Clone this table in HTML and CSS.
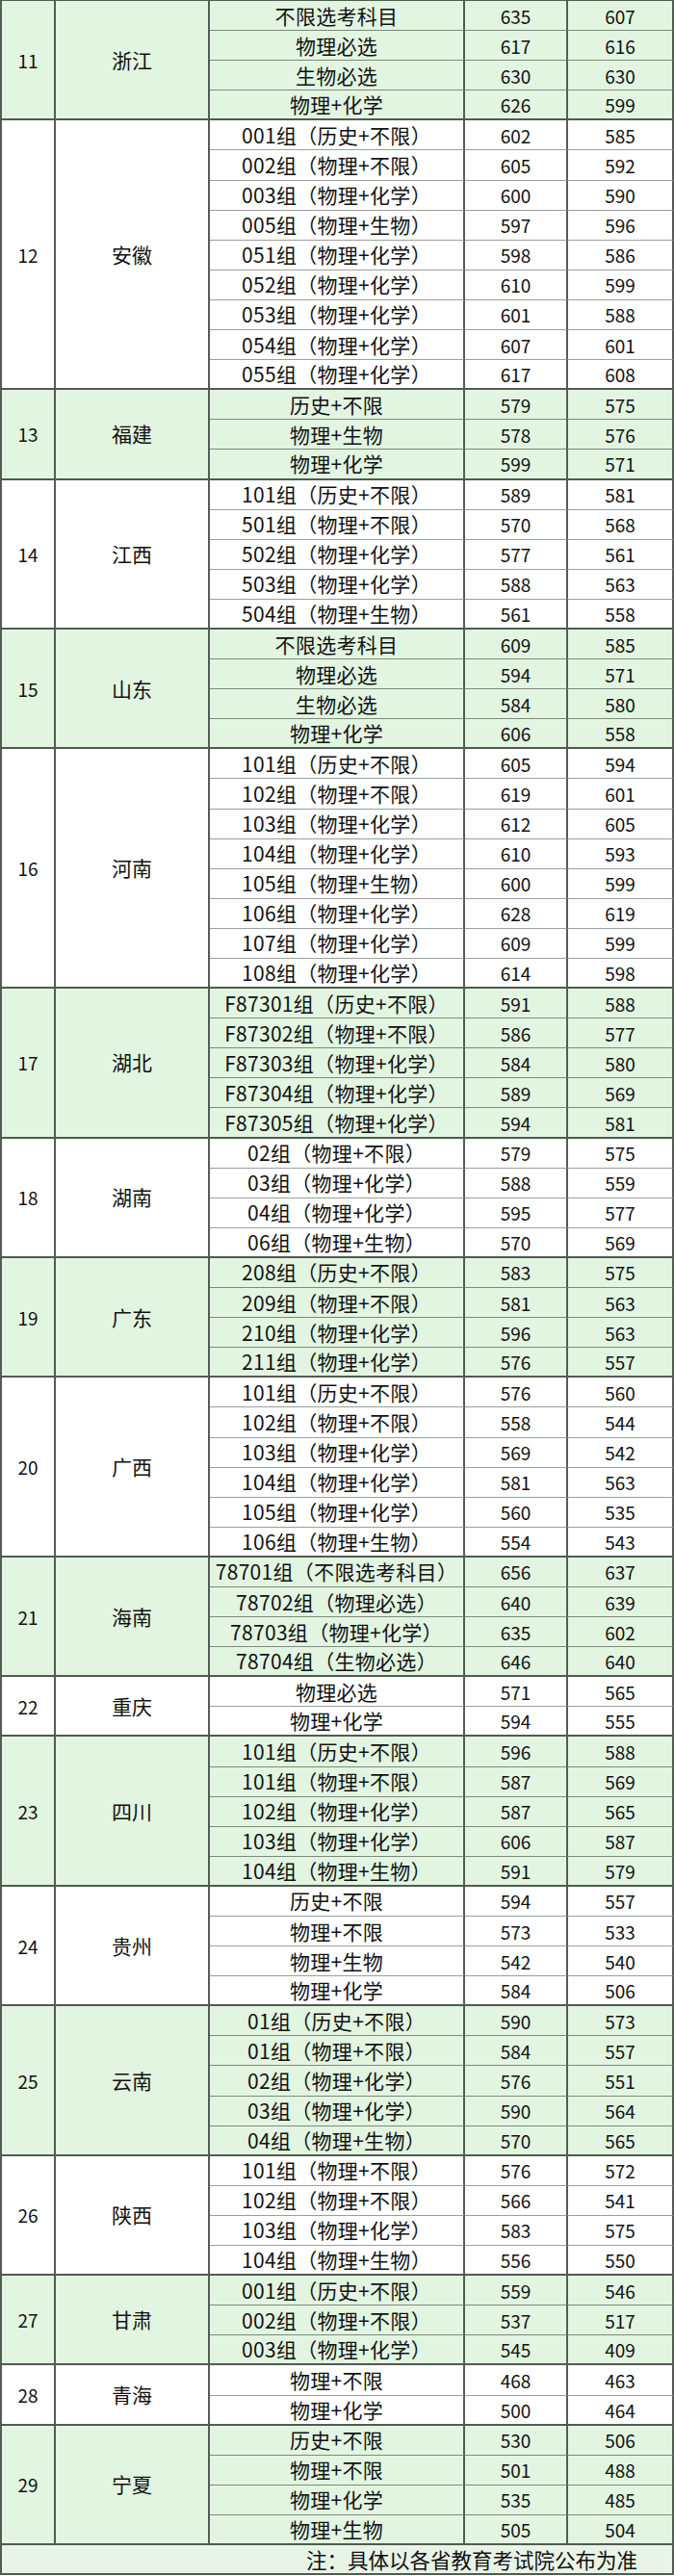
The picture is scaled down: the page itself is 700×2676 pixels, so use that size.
FILE: index.html
```html
<!DOCTYPE html>
<html lang="zh-CN">
<head>
<meta charset="utf-8">
<title>分数线</title>
<link rel="stylesheet" href="styles.css">
</head>
<body>
<div class="table">
  <div class="grp g">
    <div class="idx" style="grid-row: span 4">11</div><div class="prov" style="grid-row: span 4">浙江</div>
    <div class="row"><div class="c sub">不限选考科目</div><div class="c num">635</div><div class="c num">607</div></div>
    <div class="row"><div class="c sub">物理必选</div><div class="c num">617</div><div class="c num">616</div></div>
    <div class="row"><div class="c sub">生物必选</div><div class="c num">630</div><div class="c num">630</div></div>
    <div class="row"><div class="c sub">物理+化学</div><div class="c num">626</div><div class="c num">599</div></div>
  </div>
  <div class="grp">
    <div class="idx" style="grid-row: span 9">12</div><div class="prov" style="grid-row: span 9">安徽</div>
    <div class="row"><div class="c sub">001组（历史+不限）</div><div class="c num">602</div><div class="c num">585</div></div>
    <div class="row"><div class="c sub">002组（物理+不限）</div><div class="c num">605</div><div class="c num">592</div></div>
    <div class="row"><div class="c sub">003组（物理+化学）</div><div class="c num">600</div><div class="c num">590</div></div>
    <div class="row"><div class="c sub">005组（物理+生物）</div><div class="c num">597</div><div class="c num">596</div></div>
    <div class="row"><div class="c sub">051组（物理+化学）</div><div class="c num">598</div><div class="c num">586</div></div>
    <div class="row"><div class="c sub">052组（物理+化学）</div><div class="c num">610</div><div class="c num">599</div></div>
    <div class="row"><div class="c sub">053组（物理+化学）</div><div class="c num">601</div><div class="c num">588</div></div>
    <div class="row"><div class="c sub">054组（物理+化学）</div><div class="c num">607</div><div class="c num">601</div></div>
    <div class="row"><div class="c sub">055组（物理+化学）</div><div class="c num">617</div><div class="c num">608</div></div>
  </div>
  <div class="grp g">
    <div class="idx" style="grid-row: span 3">13</div><div class="prov" style="grid-row: span 3">福建</div>
    <div class="row"><div class="c sub">历史+不限</div><div class="c num">579</div><div class="c num">575</div></div>
    <div class="row"><div class="c sub">物理+生物</div><div class="c num">578</div><div class="c num">576</div></div>
    <div class="row"><div class="c sub">物理+化学</div><div class="c num">599</div><div class="c num">571</div></div>
  </div>
  <div class="grp">
    <div class="idx" style="grid-row: span 5">14</div><div class="prov" style="grid-row: span 5">江西</div>
    <div class="row"><div class="c sub">101组（历史+不限）</div><div class="c num">589</div><div class="c num">581</div></div>
    <div class="row"><div class="c sub">501组（物理+不限）</div><div class="c num">570</div><div class="c num">568</div></div>
    <div class="row"><div class="c sub">502组（物理+化学）</div><div class="c num">577</div><div class="c num">561</div></div>
    <div class="row"><div class="c sub">503组（物理+化学）</div><div class="c num">588</div><div class="c num">563</div></div>
    <div class="row"><div class="c sub">504组（物理+生物）</div><div class="c num">561</div><div class="c num">558</div></div>
  </div>
  <div class="grp g">
    <div class="idx" style="grid-row: span 4">15</div><div class="prov" style="grid-row: span 4">山东</div>
    <div class="row"><div class="c sub">不限选考科目</div><div class="c num">609</div><div class="c num">585</div></div>
    <div class="row"><div class="c sub">物理必选</div><div class="c num">594</div><div class="c num">571</div></div>
    <div class="row"><div class="c sub">生物必选</div><div class="c num">584</div><div class="c num">580</div></div>
    <div class="row"><div class="c sub">物理+化学</div><div class="c num">606</div><div class="c num">558</div></div>
  </div>
  <div class="grp">
    <div class="idx" style="grid-row: span 8">16</div><div class="prov" style="grid-row: span 8">河南</div>
    <div class="row"><div class="c sub">101组（历史+不限）</div><div class="c num">605</div><div class="c num">594</div></div>
    <div class="row"><div class="c sub">102组（物理+不限）</div><div class="c num">619</div><div class="c num">601</div></div>
    <div class="row"><div class="c sub">103组（物理+化学）</div><div class="c num">612</div><div class="c num">605</div></div>
    <div class="row"><div class="c sub">104组（物理+化学）</div><div class="c num">610</div><div class="c num">593</div></div>
    <div class="row"><div class="c sub">105组（物理+生物）</div><div class="c num">600</div><div class="c num">599</div></div>
    <div class="row"><div class="c sub">106组（物理+化学）</div><div class="c num">628</div><div class="c num">619</div></div>
    <div class="row"><div class="c sub">107组（物理+化学）</div><div class="c num">609</div><div class="c num">599</div></div>
    <div class="row"><div class="c sub">108组（物理+化学）</div><div class="c num">614</div><div class="c num">598</div></div>
  </div>
  <div class="grp g">
    <div class="idx" style="grid-row: span 5">17</div><div class="prov" style="grid-row: span 5">湖北</div>
    <div class="row"><div class="c sub">F87301组（历史+不限）</div><div class="c num">591</div><div class="c num">588</div></div>
    <div class="row"><div class="c sub">F87302组（物理+不限）</div><div class="c num">586</div><div class="c num">577</div></div>
    <div class="row"><div class="c sub">F87303组（物理+化学）</div><div class="c num">584</div><div class="c num">580</div></div>
    <div class="row"><div class="c sub">F87304组（物理+化学）</div><div class="c num">589</div><div class="c num">569</div></div>
    <div class="row"><div class="c sub">F87305组（物理+化学）</div><div class="c num">594</div><div class="c num">581</div></div>
  </div>
  <div class="grp">
    <div class="idx" style="grid-row: span 4">18</div><div class="prov" style="grid-row: span 4">湖南</div>
    <div class="row"><div class="c sub">02组（物理+不限）</div><div class="c num">579</div><div class="c num">575</div></div>
    <div class="row"><div class="c sub">03组（物理+化学）</div><div class="c num">588</div><div class="c num">559</div></div>
    <div class="row"><div class="c sub">04组（物理+化学）</div><div class="c num">595</div><div class="c num">577</div></div>
    <div class="row"><div class="c sub">06组（物理+生物）</div><div class="c num">570</div><div class="c num">569</div></div>
  </div>
  <div class="grp g">
    <div class="idx" style="grid-row: span 4">19</div><div class="prov" style="grid-row: span 4">广东</div>
    <div class="row"><div class="c sub">208组（历史+不限）</div><div class="c num">583</div><div class="c num">575</div></div>
    <div class="row"><div class="c sub">209组（物理+不限）</div><div class="c num">581</div><div class="c num">563</div></div>
    <div class="row"><div class="c sub">210组（物理+化学）</div><div class="c num">596</div><div class="c num">563</div></div>
    <div class="row"><div class="c sub">211组（物理+化学）</div><div class="c num">576</div><div class="c num">557</div></div>
  </div>
  <div class="grp">
    <div class="idx" style="grid-row: span 6">20</div><div class="prov" style="grid-row: span 6">广西</div>
    <div class="row"><div class="c sub">101组（历史+不限）</div><div class="c num">576</div><div class="c num">560</div></div>
    <div class="row"><div class="c sub">102组（物理+不限）</div><div class="c num">558</div><div class="c num">544</div></div>
    <div class="row"><div class="c sub">103组（物理+化学）</div><div class="c num">569</div><div class="c num">542</div></div>
    <div class="row"><div class="c sub">104组（物理+化学）</div><div class="c num">581</div><div class="c num">563</div></div>
    <div class="row"><div class="c sub">105组（物理+化学）</div><div class="c num">560</div><div class="c num">535</div></div>
    <div class="row"><div class="c sub">106组（物理+生物）</div><div class="c num">554</div><div class="c num">543</div></div>
  </div>
  <div class="grp g">
    <div class="idx" style="grid-row: span 4">21</div><div class="prov" style="grid-row: span 4">海南</div>
    <div class="row"><div class="c sub">78701组（不限选考科目）</div><div class="c num">656</div><div class="c num">637</div></div>
    <div class="row"><div class="c sub">78702组（物理必选）</div><div class="c num">640</div><div class="c num">639</div></div>
    <div class="row"><div class="c sub">78703组（物理+化学）</div><div class="c num">635</div><div class="c num">602</div></div>
    <div class="row"><div class="c sub">78704组（生物必选）</div><div class="c num">646</div><div class="c num">640</div></div>
  </div>
  <div class="grp">
    <div class="idx" style="grid-row: span 2">22</div><div class="prov" style="grid-row: span 2">重庆</div>
    <div class="row"><div class="c sub">物理必选</div><div class="c num">571</div><div class="c num">565</div></div>
    <div class="row"><div class="c sub">物理+化学</div><div class="c num">594</div><div class="c num">555</div></div>
  </div>
  <div class="grp g">
    <div class="idx" style="grid-row: span 5">23</div><div class="prov" style="grid-row: span 5">四川</div>
    <div class="row"><div class="c sub">101组（历史+不限）</div><div class="c num">596</div><div class="c num">588</div></div>
    <div class="row"><div class="c sub">101组（物理+不限）</div><div class="c num">587</div><div class="c num">569</div></div>
    <div class="row"><div class="c sub">102组（物理+化学）</div><div class="c num">587</div><div class="c num">565</div></div>
    <div class="row"><div class="c sub">103组（物理+化学）</div><div class="c num">606</div><div class="c num">587</div></div>
    <div class="row"><div class="c sub">104组（物理+生物）</div><div class="c num">591</div><div class="c num">579</div></div>
  </div>
  <div class="grp">
    <div class="idx" style="grid-row: span 4">24</div><div class="prov" style="grid-row: span 4">贵州</div>
    <div class="row"><div class="c sub">历史+不限</div><div class="c num">594</div><div class="c num">557</div></div>
    <div class="row"><div class="c sub">物理+不限</div><div class="c num">573</div><div class="c num">533</div></div>
    <div class="row"><div class="c sub">物理+生物</div><div class="c num">542</div><div class="c num">540</div></div>
    <div class="row"><div class="c sub">物理+化学</div><div class="c num">584</div><div class="c num">506</div></div>
  </div>
  <div class="grp g">
    <div class="idx" style="grid-row: span 5">25</div><div class="prov" style="grid-row: span 5">云南</div>
    <div class="row"><div class="c sub">01组（历史+不限）</div><div class="c num">590</div><div class="c num">573</div></div>
    <div class="row"><div class="c sub">01组（物理+不限）</div><div class="c num">584</div><div class="c num">557</div></div>
    <div class="row"><div class="c sub">02组（物理+化学）</div><div class="c num">576</div><div class="c num">551</div></div>
    <div class="row"><div class="c sub">03组（物理+化学）</div><div class="c num">590</div><div class="c num">564</div></div>
    <div class="row"><div class="c sub">04组（物理+生物）</div><div class="c num">570</div><div class="c num">565</div></div>
  </div>
  <div class="grp">
    <div class="idx" style="grid-row: span 4">26</div><div class="prov" style="grid-row: span 4">陕西</div>
    <div class="row"><div class="c sub">101组（物理+不限）</div><div class="c num">576</div><div class="c num">572</div></div>
    <div class="row"><div class="c sub">102组（物理+不限）</div><div class="c num">566</div><div class="c num">541</div></div>
    <div class="row"><div class="c sub">103组（物理+化学）</div><div class="c num">583</div><div class="c num">575</div></div>
    <div class="row"><div class="c sub">104组（物理+生物）</div><div class="c num">556</div><div class="c num">550</div></div>
  </div>
  <div class="grp g">
    <div class="idx" style="grid-row: span 3">27</div><div class="prov" style="grid-row: span 3">甘肃</div>
    <div class="row"><div class="c sub">001组（历史+不限）</div><div class="c num">559</div><div class="c num">546</div></div>
    <div class="row"><div class="c sub">002组（物理+不限）</div><div class="c num">537</div><div class="c num">517</div></div>
    <div class="row"><div class="c sub">003组（物理+化学）</div><div class="c num">545</div><div class="c num">409</div></div>
  </div>
  <div class="grp">
    <div class="idx" style="grid-row: span 2">28</div><div class="prov" style="grid-row: span 2">青海</div>
    <div class="row"><div class="c sub">物理+不限</div><div class="c num">468</div><div class="c num">463</div></div>
    <div class="row"><div class="c sub">物理+化学</div><div class="c num">500</div><div class="c num">464</div></div>
  </div>
  <div class="grp g">
    <div class="idx" style="grid-row: span 4">29</div><div class="prov" style="grid-row: span 4">宁夏</div>
    <div class="row"><div class="c sub">历史+不限</div><div class="c num">530</div><div class="c num">506</div></div>
    <div class="row"><div class="c sub">物理+不限</div><div class="c num">501</div><div class="c num">488</div></div>
    <div class="row"><div class="c sub">物理+化学</div><div class="c num">535</div><div class="c num">485</div></div>
    <div class="row"><div class="c sub">物理+生物</div><div class="c num">505</div><div class="c num">504</div></div>
  </div>
  <div class="note">注：具体以各省教育考试院公布为准</div>
</div>
</body>
</html>
```

FILE: styles.css
```css
html, body {
  margin: 0;
  padding: 0;
  background: #ffffff;
}

body {
  font-family: "Noto Sans CJK SC", "Noto Sans", sans-serif;
  color: #111111;
}

.table {
  display: grid;
  grid-template-columns: 58px 160px 265px 107px 110px;
  grid-auto-rows: 31.1px;
  width: 700px;
  border-top: 1px solid #4f5b4f;
  box-sizing: border-box;
}

.grp,
.row {
  display: contents;
}

.idx,
.prov,
.c {
  box-sizing: border-box;
  display: flex;
  align-items: center;
  justify-content: center;
  border-right: 2px solid #545c54;
  font-size: 21px;
  line-height: 1;
  white-space: nowrap;
  background: #ffffff;
}

.sub {
  letter-spacing: 0.3px;
}

.idx {
  border-left: 2px solid #545c54;
  border-bottom: 2px solid #4f5b4f;
  font-size: 19px;
}

.prov {
  border-bottom: 2px solid #4f5b4f;
}

.c {
  border-bottom: 1.5px solid #9aa09a;
}

.num {
  font-size: 19px;
}

.grp > .row:last-child > .c {
  border-bottom: 2px solid #4f5b4f;
}

.grp.g .idx,
.grp.g .prov,
.grp.g .c {
  background: #e2f5e1;
}

.grp.g .c {
  border-bottom-color: #7d897d;
}

.note {
  grid-column: 1 / -1;
  box-sizing: border-box;
  display: flex;
  align-items: center;
  justify-content: flex-end;
  padding-right: 36px;
  border-left: 2px solid #545c54;
  border-right: 2px solid #545c54;
  border-bottom: 2px solid #4f5b4f;
  background: #e7f4e6;
  font-size: 21.5px;
  line-height: 1;
}
```
